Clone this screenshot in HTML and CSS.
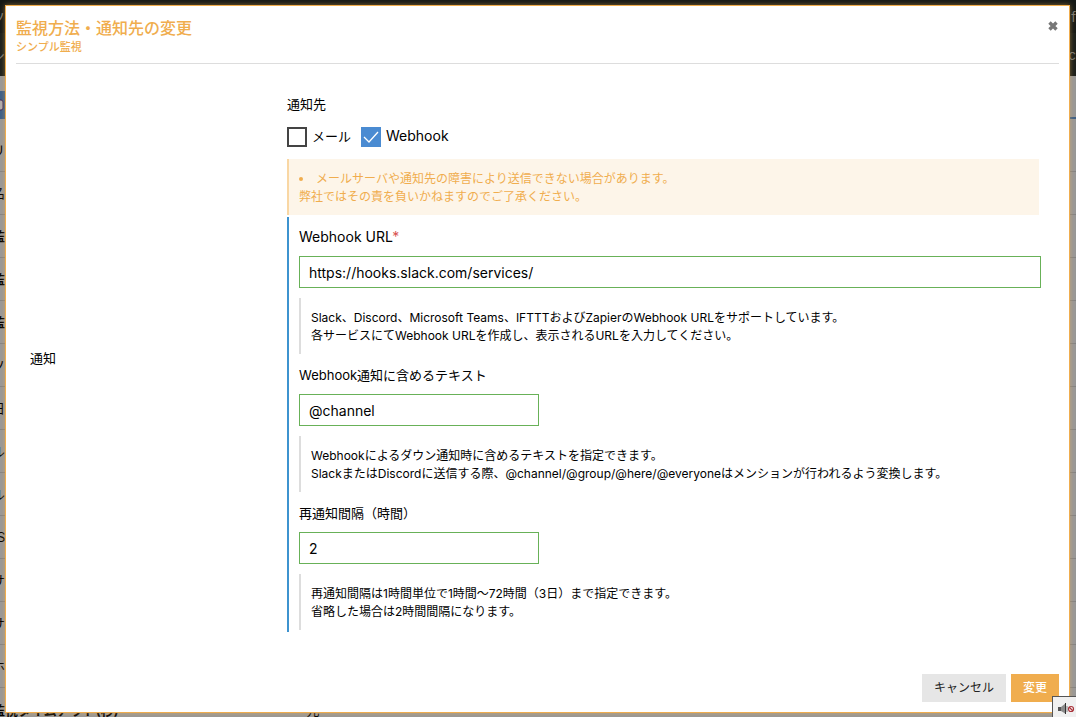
FILE: index.html
```html
<!DOCTYPE html>
<html lang="ja">
<head>
<meta charset="utf-8">
<title>監視方法・通知先の変更</title>
<link rel="stylesheet" href="styles.css">
</head>
<body>
<div class="page" aria-hidden="true">
  <div class="topbar"><span>ソ</span><span>f</span></div>
  <div class="subbar"><span>シ</span><span>るc</span></div>
  <div class="tabs"><svg class="tab" viewBox="0 0 8 28"><path fill="#3d6088" d="M0 0h8v28H0z"/><rect x="-7" y="9" width="10" height="10" rx="2" fill="#b0acae" stroke="#402b5d"/></svg></div>
  <div class="rows">
    <div class="row"><span>リ</span></div>
    <div class="row"><span>名</span></div>
    <div class="row"><b>監</b></div>
    <div class="row"><b>監</b></div>
    <div class="row"><b>監</b></div>
    <div class="row"><span>ソ</span></div>
    <div class="row"><span>日</span></div>
    <div class="row"><span>ル</span></div>
    <div class="row"><span>ル</span></div>
    <div class="row"><span class="narrow">S</span></div>
    <div class="row"><span>サ</span></div>
    <div class="row"><span>サ</span></div>
    <div class="row"><span>ホ</span></div>
    <div class="row last"><b>監視タイムアウト(秒)</b><span class="value">元</span></div>
  </div>
</div>

<div class="modal" role="dialog" aria-labelledby="dialog-title">
  <header class="modal-head">
    <div>
      <h1 id="dialog-title">監視方法・通知先の変更</h1>
      <p class="subtitle">シンプル監視</p>
    </div>
    <button class="close" type="button" aria-label="閉じる">
      <svg viewBox="0 0 10 10"><path d="M1.5 1.5l7 7M8.500 1.500l-7 7" stroke="#777" stroke-width="3.400"/></svg>
    </button>
  </header>

  <form class="form">
    <div class="form-label">通知</div>
    <div class="form-body">
      <div class="field-title">通知先</div>
      <div class="checks">
        <label class="check"><input type="checkbox"><span>メール</span></label>
        <label class="check latin"><input type="checkbox" checked><span>Webhook</span></label>
      </div>
      <div class="note warning">
        <ul><li>メールサーバや通知先の障害により送信できない場合があります。<br>弊社ではその責を負いかねますのでご了承ください。</li></ul>
      </div>
      <div class="webhook">
        <div class="group">
          <label class="latin" for="url">Webhook URL<span class="required">*</span></label>
          <input id="url" class="wide" type="text" value="https://hooks.slack.com/services/">
          <p class="note">Slack、Discord、Microsoft Teams、IFTTTおよびZapierのWebhook URLをサポートしています。<br>各サービスにてWebhook URLを作成し、表示されるURLを入力してください。</p>
        </div>
        <div class="group">
          <label for="text">Webhook通知に含めるテキスト</label>
          <input id="text" type="text" value="@channel">
          <p class="note">Webhookによるダウン通知時に含めるテキストを指定できます。<br>SlackまたはDiscordに送信する際、@channel/@group/@here/@everyoneはメンションが行われるよう変換します。</p>
        </div>
        <div class="group">
          <label for="interval">再通知間隔（時間）</label>
          <input id="interval" type="text" value="2">
          <p class="note">再通知間隔は1時間単位で1時間〜72時間（3日）まで指定できます。<br>省略した場合は2時間間隔になります。</p>
        </div>
      </div>
    </div>
  </form>

  <footer class="actions">
    <button class="button" type="button">キャンセル</button>
    <button class="button primary" type="button">変更</button>
  </footer>
</div>

<button class="sound" type="button" aria-label="ミュート">
  <svg viewBox="0 0 17 12"><path d="M0 4h3v4H0z" fill="#555"/><path d="M3 4l5-4v11L3 8z" fill="#8a8a8a"/><path d="M7 0h1v11H7z" fill="#333"/><path d="M9 3v6" stroke="#888"/><circle cx="13" cy="6" r="2.5" fill="#fff" stroke="#a8323a" stroke-width="1.2"/><path d="M11 4l4 4" stroke="#a8323a" stroke-width="1.2"/></svg>
</button>
</body>
</html>
```
FILE: styles.css
```css
* { box-sizing: border-box; }
body {
  margin: 0;
  min-height: 100vh;
  overflow: hidden;
  background: #989898;
  color: #000;
  font: 13px/20px Inter, "Noto Sans CJK JP", sans-serif;
}
h1, p, ul { margin: 0; padding: 0; }
button, input { font: inherit; color: inherit; margin: 0; }

.page { height: 100vh; overflow: hidden; }
.topbar, .subbar {
  display: flex;
  justify-content: space-between;
  align-items: center;
  height: 33px;
  background: #161a17;
  color: #7b7b76;
}
.topbar span:first-child, .subbar span:first-child { margin-left: -8px; }
.subbar { height: 43px; background: #1c201c; }
.tabs {
  height: 43px;
  padding-top: 15px;
  border-bottom: 2px solid #3d6088;
}
.tab { display: block; width: 8px; height: 28px; }
.rows { padding-top: 10px; }
.row {
  display: flex;
  align-items: center;
  height: 43px;
  border-bottom: 1px solid #848484;
}
.row span, .row b { margin-left: -8px; }
.row .narrow { margin-left: -3px; }
.row .value { margin-left: 188px; }
.row.last { border-bottom: 0; }

.modal {
  position: absolute;
  inset: 5px 6px 4px 5px;
  display: flex;
  flex-direction: column;
  padding: 10px;
  border: 1px solid #f0ad4e;
  background: #fff;
  box-shadow: 0 0 5px rgba(240, 173, 78, .5);
}
.modal-head {
  display: flex;
  justify-content: space-between;
  align-items: flex-start;
  height: 48px;
  border-bottom: 1px solid #ddd;
  color: #f0ad4e;
}
h1 { font-size: 16px; line-height: 24px; font-weight: 500; }
.subtitle { font-size: 11px; line-height: 14px; font-weight: 500; }
.close {
  display: flex;
  padding: 5px 1px;
  border: 0;
  background: none;
}
.close svg { width: 10px; height: 10px; }

.form {
  display: flex;
  align-items: center;
  padding: 20px 18px 0 14px;
}
.form-label { flex: 0 0 257px; }
.form-body { flex: 1; min-width: 0; padding-top: 10px; }
.checks { display: flex; gap: 10px; margin: 13px 0 12px; }
.check { display: flex; align-items: center; gap: 5px; line-height: 18px; }
.check input {
  appearance: none;
  width: 20px;
  height: 20px;
  margin: 0;
  border: 2px solid #444;
  background: #fff;
}
.check span { padding-bottom: 2px; }
.check input:checked {
  border: 0;
  background: #4a8bd2 url("data:image/svg+xml,%3Csvg xmlns='http://www.w3.org/2000/svg' viewBox='0 0 20 20'%3E%3Cpath d='M3 10l5 5 9-10' fill='none' stroke='white' stroke-width='1.3'/%3E%3C/svg%3E");
}
.latin { font-size: 14px; }

.note {
  padding: 11px 10px 9px;
  border-left: 2px solid #ddd;
  font-size: 12px;
  line-height: 18px;
}
.warning {
  margin: 0 2px 2px 0;
  border-color: #f9d7a4;
  background: #fdf5e9;
  color: #f0ad4e;
}
.warning ul { list-style-position: inside; }

.webhook { border-left: 2px solid #3d93cf; padding: 0 0 1px 10px; }
.group { display: flex; flex-direction: column; padding: 10px 0 1px; }
.group input {
  width: 240px;
  height: 32px;
  margin: 9px 0 10px;
  padding: 0 9px;
  border: 1px solid #68b158;
  background: #fff;
  font-size: 14px;
}
.group .wide { width: 100%; }
.required { color: #d9534f; }

.actions {
  display: flex;
  justify-content: flex-end;
  gap: 5px;
  margin-top: auto;
}
.button {
  height: 28px;
  padding: 0 12px;
  border: 0;
  background: #e6e6e6;
  color: #222;
  font-size: 12px;
}
.primary { background: #f0ad4e; color: #fff; font-weight: 500; }

.sound {
  position: absolute;
  right: 0;
  bottom: 0;
  display: flex;
  width: 24px;
  height: 21px;
  padding: 6px 0 0 5px;
  border: 0 solid #555;
  border-width: 1px 0 0 1px;
  background: #f0f0f0;
}
.sound svg { width: 17px; height: 12px; }
```
